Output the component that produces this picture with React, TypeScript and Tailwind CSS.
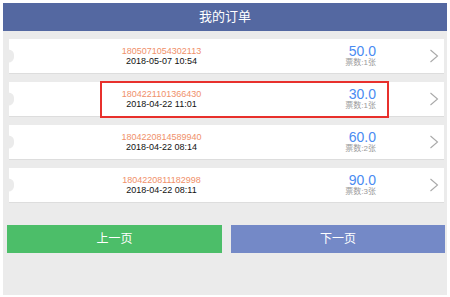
import React from "react";

const orders = [
  { no: "1805071054302113", date: "2018-05-07 10:54", price: "50.0", count: "1" },
  { no: "1804221101366430", date: "2018-04-22 11:01", price: "30.0", count: "1" },
  { no: "1804220814589940", date: "2018-04-22 08:14", price: "60.0", count: "2" },
  { no: "1804220811182998", date: "2018-04-22 08:11", price: "90.0", count: "3" },
];

function Chevron() {
  return (
    <svg width="10" height="14" viewBox="0 0 10 14" fill="none">
      <path d="M1.5 1 L8.5 7 L1.5 13" stroke="#a9a9a9" strokeWidth="1.1" />
    </svg>
  );
}

export default function App() {
  return (
    <div
      className="relative w-[450px] h-[297px] bg-white pl-[3px] pt-[3px]"
      style={{ fontFamily: '"Liberation Sans", "Noto Sans CJK SC", sans-serif' }}
    >
      <div className="w-[444px] h-[292px] bg-[#ebebeb] flex flex-col">
        <div className="h-[28px] bg-[#5468a1] flex items-center justify-center text-white text-[13px]">
          我的订单
        </div>
        <div className="flex flex-col gap-[8px] pt-[8px] pl-[6px] pr-[3px]">
          {orders.map((o) => (
            <div
              key={o.no}
              className="relative h-[35px] bg-white border-b border-[#dddddd] flex items-center"
            >
              <div className="absolute left-[-6px] top-1/2 -translate-y-1/2 w-[11px] h-[13px] rounded-full bg-[#ebebeb]" />
              <div className="w-[305px] flex flex-col items-center leading-[10px]">
                <span className="text-[9px] text-[#f0906a]">{o.no}</span>
                <span className="text-[9px] text-[#111111]">{o.date}</span>
              </div>
              <div className="w-[62px] flex flex-col items-end">
                <span className="text-[14px] leading-[14px] text-[#4a8bf2]">{o.price}</span>
                <span className="text-[8px] leading-[10px] text-[#9a9a9a]">票数:{o.count}张</span>
              </div>
              <div className="ml-auto mr-[5px] flex items-center">
                <Chevron />
              </div>
            </div>
          ))}
        </div>
        <div className="flex gap-[9px] pl-[4px] pr-[1px] mt-[22px]">
          <div className="w-[215px] h-[28px] bg-[#4cbe69] flex items-center justify-center text-white text-[12px]">
            上一页
          </div>
          <div className="w-[214px] h-[28px] bg-[#7489c7] flex items-center justify-center text-white text-[12px]">
            下一页
          </div>
        </div>
      </div>
      <div className="absolute left-[100px] top-[81px] w-[289px] h-[37px] border-2 border-[#e8302c]" />
    </div>
  );
}
